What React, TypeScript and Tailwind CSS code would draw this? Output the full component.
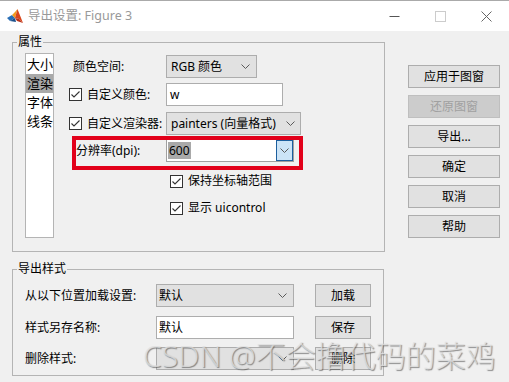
import React from "react";

function Chevron() {
  return (
    <svg width="9" height="5" viewBox="0 0 9 5" className="shrink-0">
      <path d="M0.5 0.5 L4.5 4.5 L8.5 0.5" fill="none" stroke="#5a5a5a" strokeWidth="1" />
    </svg>
  );
}

function Check() {
  return (
    <div className="w-[13px] h-[13px] border border-[#333333] bg-white flex items-center justify-center shrink-0">
      <svg width="11" height="11" viewBox="0 0 11 11">
        <path d="M1.5 5.5 L4 8 L9.5 2.5" fill="none" stroke="#333333" strokeWidth="1.1" />
      </svg>
    </div>
  );
}

function Btn({ children, disabled = false, extra = "" }: { children?: React.ReactNode; disabled?: boolean; extra?: string }) {
  return (
    <div
      className={
        "h-[23px] flex items-center justify-center border " +
        (disabled ? "bg-[#cccccc] border-[#bfbfbf] text-[#a0a0a0] " : "bg-[#e1e1e1] border-[#adadad] text-black ") +
        extra
      }
    >
      {children}
    </div>
  );
}

function Logo() {
  return (
    <svg width="16" height="16" viewBox="0 0 16 16" className="shrink-0">
      <polygon points="0,10 5,7 8,10 3,13" fill="#2a6fb6" />
      <polygon points="3,13 8,10 9,14" fill="#1b4f8a" />
      <polygon points="5,7 8,10 10.5,1 8,4" fill="#f29a1c" />
      <polygon points="8,10 10.5,1 16,15 12,11" fill="#d9461c" />
      <polygon points="8,10 12,11 16,15 10,13" fill="#b8321a" />
    </svg>
  );
}

export default function App() {
  return (
    <div className="w-[509px] h-[382px] overflow-hidden relative bg-[#f0f0f0] text-[12px] leading-none text-black font-['Noto_Sans','Noto_Sans_CJK_SC',sans-serif]">
      {/* Title bar */}
      <div className="h-[31px] bg-white border-t border-[#aaaaaa] flex items-center">
        <div className="ml-[7px] mt-[-1px]">
          <Logo />
        </div>
        <span className="ml-[5px] text-[12.5px] text-[#999999]">导出设置: Figure 3</span>
        <div className="ml-auto flex items-center h-full">
          <div className="w-[46px] h-full flex items-center justify-center">
            <svg width="11" height="11" viewBox="0 0 11 11">
              <path d="M0.5 5.5 H10.5" stroke="#555555" strokeWidth="1" />
            </svg>
          </div>
          <div className="w-[46px] h-full flex items-center justify-center">
            <svg width="11" height="11" viewBox="0 0 11 11">
              <rect x="0.5" y="0.5" width="10" height="10" fill="none" stroke="#cccccc" strokeWidth="1" />
            </svg>
          </div>
          <div className="w-[46px] h-full flex items-center justify-center">
            <svg width="11" height="11" viewBox="0 0 11 11">
              <path d="M0.5 0.5 L10.5 10.5 M10.5 0.5 L0.5 10.5" stroke="#666666" strokeWidth="1" />
            </svg>
          </div>
        </div>
      </div>

      {/* Body */}
      <div className="flex pl-[12px]">
        <div className="flex flex-col">
          {/* 属性 */}
          <div className="relative mt-[11px] w-[373px] h-[210px] border border-[#b4b4b4]">
            <span className="absolute top-[-9px] left-[4px] px-[1px] bg-[#f0f0f0] leading-[16px]">属性</span>
            <div className="flex pl-[12px]">
              <div className="mt-[10px] w-[29px] h-[185px] bg-white border border-[#b4b4b4] pt-[1px] overflow-hidden text-[13px]">
                <div className="h-[19px] flex items-center pl-[1px] whitespace-nowrap">大小</div>
                <div className="h-[19px] flex items-center pl-[1px] bg-[#a9a9a9] whitespace-nowrap">渲染</div>
                <div className="h-[19px] flex items-center pl-[1px] whitespace-nowrap">字体</div>
                <div className="h-[19px] flex items-center pl-[1px] whitespace-nowrap">线条</div>
              </div>
              <div className="ml-[15px] flex flex-col">
                <div className="mt-[12px] h-[23px] flex items-center">
                  <div className="w-[97px] pl-[4px]">颜色空间:</div>
                  <div className="w-[91px] h-[23px] bg-[#e1e1e1] border border-[#adadad] flex items-center pl-[4px] pr-[6px]">
                    <span className="flex-1">RGB 颜色</span>
                    <Chevron />
                  </div>
                </div>
                <div className="mt-[5px] h-[23px] flex items-center">
                  <div className="w-[97px] flex items-center">
                    <Check />
                    <span className="ml-[5px]">自定义颜色:</span>
                  </div>
                  <div className="w-[117px] h-[23px] bg-white border border-[#adadad] flex items-center pl-[3px]">w</div>
                </div>
                <div className="mt-[6px] h-[23px] flex items-center">
                  <div className="w-[97px] flex items-center">
                    <Check />
                    <span className="ml-[5px] whitespace-nowrap">自定义渲染器:</span>
                  </div>
                  <div className="w-[135px] h-[23px] bg-[#e1e1e1] border border-[#adadad] flex items-center pl-[4px] pr-[5px]">
                    <span className="flex-1 whitespace-nowrap">painters (向量格式)</span>
                    <Chevron />
                  </div>
                </div>
                <div className="mt-[4px] h-[23px] flex items-center">
                  <div className="w-[97px] pl-[7px] whitespace-nowrap">分辨率(dpi):</div>
                  <div className="w-[128px] h-[23px] bg-white border border-[#a0a0a0] flex items-center pl-[1px]">
                    <span className="flex-1 flex items-center">
                      <span className="bg-[#a9a9a9] h-[17px] px-[1px] flex items-center">600</span>
                    </span>
                    <div className="w-[17px] h-[21px] bg-[#cce4f7] border border-[#1c5f9e] flex items-center justify-center">
                      <Chevron />
                    </div>
                  </div>
                </div>
                <div className="mt-[11px] h-[16px] flex items-center pl-[101px]">
                  <Check />
                  <span className="ml-[5px]">保持坐标轴范围</span>
                </div>
                <div className="mt-[11px] h-[16px] flex items-center pl-[101px]">
                  <Check />
                  <span className="ml-[5px]">显示 uicontrol</span>
                </div>
              </div>
            </div>
          </div>

          {/* 导出样式 */}
          <div className="relative mt-[17px] w-[372px] h-[107px] border border-[#b4b4b4]">
            <span className="absolute top-[-9px] left-[4px] px-[1px] bg-[#f0f0f0] leading-[16px]">导出样式</span>
            <div className="flex flex-col pl-[12px]">
              <div className="mt-[14px] h-[23px] flex items-center">
                <div className="w-[131px] whitespace-nowrap">从以下位置加载设置:</div>
                <div className="w-[138px] h-[23px] bg-[#e1e1e1] border border-[#adadad] flex items-center pl-[2px] pr-[6px]">
                  <span className="flex-1">默认</span>
                  <Chevron />
                </div>
                <Btn extra="ml-[21px] w-[56px]">加载</Btn>
              </div>
              <div className="mt-[9px] h-[23px] flex items-center">
                <div className="w-[131px] whitespace-nowrap">样式另存名称:</div>
                <div className="w-[138px] h-[23px] bg-white border border-[#adadad] flex items-center pl-[2px]">默认</div>
                <Btn extra="ml-[21px] w-[56px]">保存</Btn>
              </div>
              <div className="mt-[8px] h-[23px] flex items-center">
                <div className="w-[131px] whitespace-nowrap">删除样式:</div>
                <div className="w-[138px] h-[23px] bg-[#e1e1e1] border border-[#adadad] flex items-center pl-[2px] pr-[6px]">
                  <span className="flex-1"></span>
                  <Chevron />
                </div>
                <Btn extra="ml-[21px] w-[56px] text-[#606060]">删除</Btn>
              </div>
            </div>
          </div>
        </div>

        {/* Right buttons */}
        <div className="ml-[23px] mt-[34px] w-[92px] flex flex-col gap-[7px]">
          <Btn>应用于图窗</Btn>
          <Btn disabled>还原图窗</Btn>
          <Btn>导出...</Btn>
          <Btn>确定</Btn>
          <Btn>取消</Btn>
          <Btn>帮助</Btn>
        </div>
      </div>

      {/* Red annotation */}
      <div className="absolute left-[72px] top-[136px] w-[231px] h-[34px] border-4 border-[#e2001a]"></div>

      {/* Watermark */}
      <div className="absolute left-[143px] top-[335px] text-[30px] leading-[42px] font-light whitespace-nowrap text-[rgba(225,225,225,0.75)] [text-shadow:1px_1px_1px_rgba(70,70,70,0.6)]">
        CSDN @不会撸代码的菜鸡
      </div>
    </div>
  );
}
